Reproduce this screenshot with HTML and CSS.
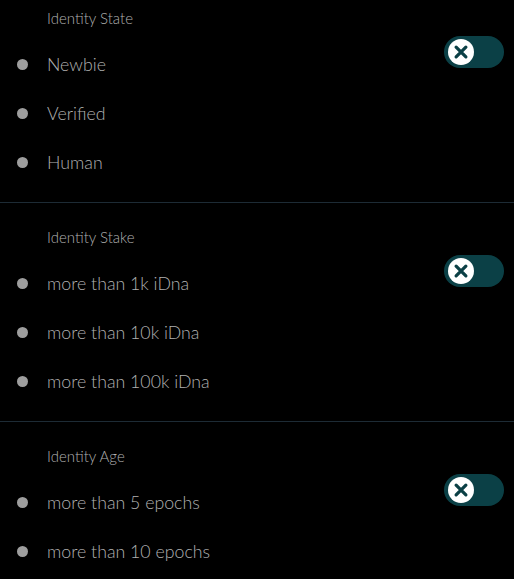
FILE: index.html
```html
<!DOCTYPE html>
<html lang="en">
<head>
  <meta charset="UTF-8">
  <title>Identity Filters</title>
  <link rel="stylesheet" href="styles.css">
</head>
<body>

<!-- Identity State -->
<div class="filter first">
  <div class="filter-body">
    <div class="filter-title">Identity State</div>
    <ul class="options">
      <li>Newbie</li>
      <li>Verified</li>
      <li>Human</li>
    </ul>
  </div>
  <div class="toggle"><span class="knob"><svg viewBox="0 0 24 24"><path d="M7.5 7.5l9 9M16.5 7.5l-9 9"/></svg></span></div>
</div>

<!-- Identity Stake -->
<div class="filter">
  <div class="filter-body">
    <div class="filter-title">Identity Stake</div>
    <ul class="options">
      <li>more than 1k iDna</li>
      <li>more than 10k iDna</li>
      <li>more than 100k iDna</li>
    </ul>
  </div>
  <div class="toggle"><span class="knob"><svg viewBox="0 0 24 24"><path d="M7.5 7.5l9 9M16.5 7.5l-9 9"/></svg></span></div>
</div>

<!-- Identity Age -->
<div class="filter">
  <div class="filter-body">
    <div class="filter-title">Identity Age</div>
    <ul class="options">
      <li>more than 5 epochs</li>
      <li>more than 10 epochs</li>
    </ul>
  </div>
  <div class="toggle"><span class="knob"><svg viewBox="0 0 24 24"><path d="M7.5 7.5l9 9M16.5 7.5l-9 9"/></svg></span></div>
</div>

</body>
</html>
```

FILE: styles.css
```css
body {
  font-family: Lato, "Open Sans", sans-serif;
  background: #000;
  color: #b0b0b0;
  margin: 0;
}
.filter {
  display: flex;
  justify-content: space-between;
  align-items: flex-start;
  padding: 24px 10px 15px 0;
  border-top: 1px solid #1d2b35;
}
.filter.first {
  padding-top: 8px;
  border-top: none;
}
.filter-title {
  font-size: 15px;
  font-weight: 300;
  line-height: 20px;
  padding-left: 47px;
  margin-bottom: 12px;
}
.options {
  list-style: none;
  margin: 0;
  padding: 0;
}
.options li {
  display: flex;
  align-items: center;
  gap: 19px;
  padding-left: 17px;
  font-size: 17.75px;
  font-weight: 300;
  line-height: 49px;
}
.options li::before {
  content: "";
  width: 11px;
  height: 11px;
  border-radius: 50%;
  background: #9e9e9e;
}
.toggle {
  width: 60px;
  height: 32px;
  margin-top: 28px;
  border-radius: 16px;
  background: #0b4046;
  display: flex;
  align-items: center;
  padding-left: 4px;
  box-sizing: border-box;
}
.knob {
  width: 26px;
  height: 26px;
  border-radius: 50%;
  background: #fff;
  display: flex;
}
.knob svg {
  width: 26px;
  height: 26px;
  fill: none;
  stroke: #0b4046;
  stroke-width: 3;
  stroke-linecap: round;
}
```
